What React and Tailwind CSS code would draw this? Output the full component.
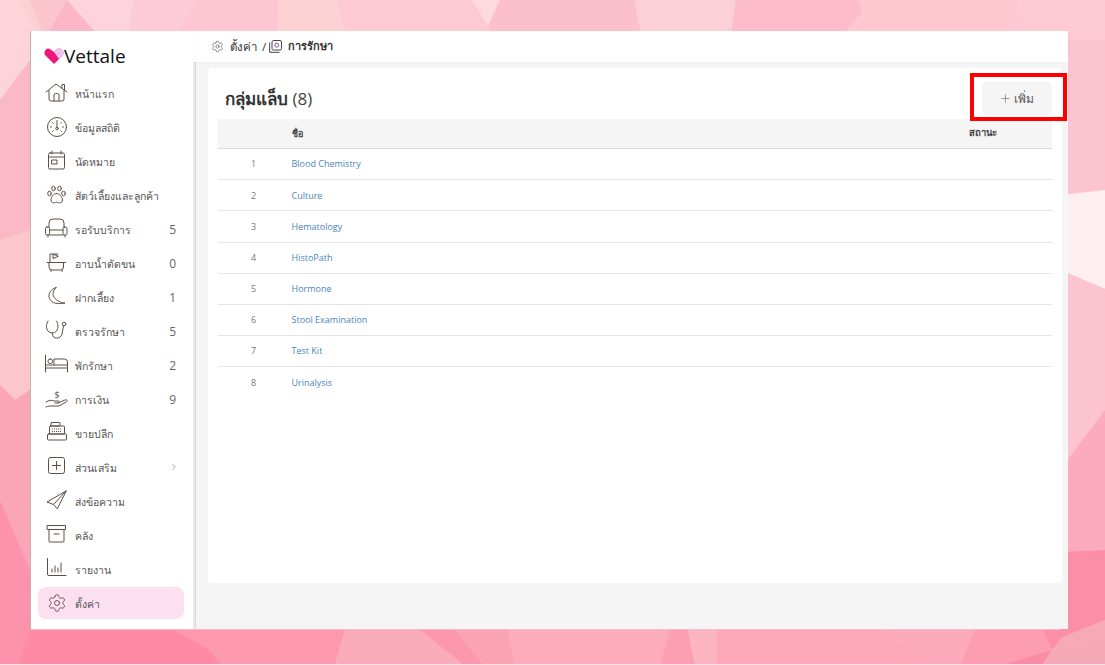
import React from "react";
import { Settings, ChevronRight, Plus } from "lucide-react";

const polys = [
  ["0,0 20,0 60,40 60,62 0,100", "#fdd4d9"],
  ["20,0 30,0 45,32 42,40", "#fbd0d3"],
  ["30,0 67,0 45,40", "#fcc5cd"],
  ["67,0 45,40 102,40", "#fbb7c7"],
  ["67,0 134,0 128,40 102,40", "#fdd3dd"],
  ["134,0 197,0 175,40 128,40", "#fccbd7"],
  ["197,0 278,0 278,40 175,40", "#fdc6d2"],
  ["278,0 338,0 348,40 278,40", "#fbd1d3"],
  ["338,0 472,0 488,27 500,40 348,40", "#fdcad3"],
  ["472,0 500,0 488,27", "#fddade"],
  ["500,0 634,0 642,40 500,40 488,27", "#fcbfcc"],
  ["634,0 736,0 730,40 642,40", "#fbd0d6"],
  ["736,0 858,0 862,12 838,40 730,40", "#fdbccb"],
  ["858,0 1018,0 1005,40 838,40 862,12", "#fdc8d0"],
  ["1018,0 1105,0 1105,40 1005,40", "#fdc9d3"],
  ["0,100 30,60 30,240 0,240", "#fbb8c6"],
  ["0,240 30,230 30,390 15,400 0,385", "#fcc6cd"],
  ["0,385 15,400 30,390 30,570 0,500", "#faa6b6"],
  ["0,500 30,570 30,665 0,665", "#fd92ad"],
  ["0,630 30,630 18,665 0,665", "#fd92ad"],
  ["30,630 175,630 210,650 222,665 18,665", "#fe8aa5"],
  ["175,630 345,630 335,665 222,665 210,650", "#fd99ad"],
  ["345,630 420,630 464,665 335,665", "#faacba"],
  ["420,630 455,630 484,665 464,665", "#fc98ad"],
  ["455,630 508,630 514,665 484,665", "#fca3b2"],
  ["508,630 670,630 660,665 514,665", "#fdacbb"],
  ["670,630 688,630 695,665 660,665", "#fc9fb3"],
  ["688,630 717,630 717,665 695,665", "#fdb5c3"],
  ["717,630 880,630 930,665 717,665", "#fea8ba"],
  ["880,630 975,630 960,665 930,665", "#fdaabd"],
  ["975,630 1043,630 1052,650 1000,665 960,665", "#fc9db2"],
  ["1043,630 1068,630 1052,650", "#fc8fa7"],
  ["1052,650 1105,640 1105,665 1042,665", "#f5a9b5"],
  ["1052,650 1042,665 1000,665", "#fc8ca6"],
  ["1068,630 1105,618 1105,640 1052,650", "#f6aab6"],
  ["1060,40 1105,40 1105,190 1060,195", "#fcc4d0"],
  ["1060,195 1105,190 1105,289 1060,270", "#fdeef0"],
  ["1060,270 1105,289 1105,410 1060,470", "#fbc4d0"],
  ["1060,470 1105,410 1105,550 1060,552", "#fcaabd"],
  ["1060,552 1105,550 1105,620 1060,638", "#fc8fa7"],
];

const S = ({ children }) => (
  <svg width="24" height="22" viewBox="0 0 24 22" fill="none" stroke="#5a5047" strokeWidth="1" strokeLinecap="round" strokeLinejoin="round">
    {children}
  </svg>
);

const icons = {
  home: <S><path d="M1 10 L11 2 L22 10" /><path d="M17 6 V2.5 H19.5 V8" /><path d="M4 8.5 V17 a2 2 0 0 0 2 2 H17 a2 2 0 0 0 2 -2 V8.5" /><path d="M9 19 V13 a1.5 1.5 0 0 1 1.5 -1.5 h2 a1.5 1.5 0 0 1 1.5 1.5 V19" /></S>,
  gauge: <S><circle cx="12" cy="11" r="9.5" /><path d="M12 4.5 V11" /><circle cx="12" cy="12.5" r="1.3" /><path d="M5.5 11 H6.5 M17.5 11 H18.5 M7.5 6.5 L8.2 7.2 M16.5 6.5 L15.8 7.2 M7.5 15.5 L8.2 14.8 M16.5 15.5 L15.8 14.8" /></S>,
  calendar: <S><rect x="3.5" y="3" width="16" height="16" rx="1.5" /><path d="M3.5 7 H19.5 M7 1 V4 M16 1 V4" /><rect x="7" y="10" width="5" height="4" /></S>,
  paw: <S><ellipse cx="4.5" cy="9.5" rx="1.8" ry="2.3" /><ellipse cx="8.5" cy="4.5" rx="1.8" ry="2.3" /><ellipse cx="14.5" cy="4.5" rx="1.8" ry="2.3" /><ellipse cx="18.5" cy="9.5" rx="1.8" ry="2.3" /><path d="M11.5 9.5 C8.5 9.5 6 13 6 16 C6 19 9 19.5 11.5 18 C14 19.5 17.5 19 17.5 16 C17.5 13 14.5 9.5 11.5 9.5 Z" /></S>,
  sofa: <S><path d="M4 9 V5 a4 4 0 0 1 4 -4 H15 a4 4 0 0 1 4 4 V9" /><rect x="0.5" y="9" width="4" height="8" rx="1.5" /><rect x="18" y="9" width="4" height="8" rx="1.5" /><path d="M4.5 12 H18 M4.5 17 H18 M3 17 V19 M20 17 V19" /></S>,
  bath: <S><path d="M5 10.5 V2 H13" /><path d="M8 2.5 V6.5 L13 4.5 Z" /><path d="M2 10.5 H20.5" /><path d="M4 10.5 V15 a3 3 0 0 0 3 3 H15.5 a3 3 0 0 0 3 -3 V10.5" /><path d="M6 18 V19.5 M17 18 V19.5" /></S>,
  moon: <S><path d="M11 1.5 C5 3.5 3.5 8 4 11 C5 16 10 19 20 17 C13 16.5 8.5 12 8 8.5 C8 6 9 3.5 11 1.5 Z" /></S>,
  steth: <S><path d="M3 1 C1 4 1 9 3 11 C5 13.5 9.5 13.5 11.5 11 C13.5 8 13.5 4 11.5 1" /><path d="M7.5 13 V14 C7.5 19.5 15.5 19.5 17 14 L18.5 6" /><circle cx="19" cy="4" r="1.8" /></S>,
  bed: <S><path d="M0.5 1 V18 M0.5 14 H22.5 M22.5 18 V8 a3 3 0 0 0 -3 -3 H9 V11 M0.5 11 H22.5" /><rect x="3" y="5" width="4.5" height="4.5" rx="2" /></S>,
  hand: <S><text x="12" y="10" textAnchor="middle" fontSize="9" fill="#5a5047" stroke="none" fontFamily="'Open Sans',sans-serif">$</text><path d="M1 14 C4 12 7 12 9 13 H13 C15 13 15 15 13 15 H10 M13 15 L20 12 C22 11 23 13 21 14 L14 18 H8 C5 18 3 18 1 19" /></S>,
  register: <S><rect x="6" y="0.5" width="9" height="3.5" rx="0.5" /><rect x="4.5" y="4" width="15" height="8" rx="1" /><rect x="2.5" y="12" width="19" height="6" rx="1" /><path d="M7 7 H17 M7 9.5 H17" strokeDasharray="1 1" strokeLinecap="butt" /></S>,
  plus: <S><rect x="3.5" y="1.5" width="16" height="16" rx="2" /><path d="M11.5 5.5 V13.5 M7.5 9.5 H15.5" /></S>,
  plane: <S><path d="M21 1 L2 12 L8.5 14.5 L12 18.5 Z M21 1 L8.5 14.5" /></S>,
  archive: <S><rect x="2.5" y="1.5" width="18" height="4" /><path d="M4 5.5 V17 a1 1 0 0 0 1 1 H18 a1 1 0 0 0 1 -1 V5.5 M9 10 H14" /></S>,
  chart: <S><path d="M2.5 0.5 V16 a1.5 1.5 0 0 0 1.5 1.5 H21" /><path d="M7 14 V11 M10 14 V8 M13 14 V10 M16 14 V5" /></S>,
  gear: <Settings size={20} strokeWidth={1} color="#5a4048" />,
};

const nav = [
  ["หน้าแรก", "home"],
  ["ข้อมูลสถิติ", "gauge"],
  ["นัดหมาย", "calendar"],
  ["สัตว์เลี้ยงและลูกค้า", "paw"],
  ["รอรับบริการ", "sofa", "5"],
  ["อาบน้ำตัดขน", "bath", "0"],
  ["ฝากเลี้ยง", "moon", "1"],
  ["ตรวจรักษา", "steth", "5"],
  ["พักรักษา", "bed", "2"],
  ["การเงิน", "hand", "9"],
  ["ขายปลีก", "register"],
  ["ส่วนเสริม", "plus", ">"],
  ["ส่งข้อความ", "plane"],
  ["คลัง", "archive"],
  ["รายงาน", "chart"],
  ["ตั้งค่า", "gear"],
];

const rows = ["Blood Chemistry", "Culture", "Hematology", "HistoPath", "Hormone", "Stool Examination", "Test Kit", "Urinalysis"];

export default function App() {
  return (
    <div className="relative w-[1105px] h-[665px] overflow-hidden bg-[#fcb8c8] font-['Open_Sans','Noto_Sans',sans-serif] pt-[31px] pl-[30px]">
      <svg className="absolute inset-0" width="1105" height="665" viewBox="0 0 1105 665">
        {polys.map(([p, c], i) => <polygon key={i} points={p} fill={c} />)}
        <rect x="0" y="664" width="1105" height="1" fill="#f3dfe4" />
      </svg>
      <div className="relative flex w-[1038px] h-[598px] bg-[#f5f5f5] border-l border-[#bfb0b4]">
        <aside className="w-[162px] shrink-0 bg-white flex flex-col">
          <div className="flex items-center h-[46px] pl-[13px] pt-[4px]">
            <svg width="20" height="16" viewBox="0 0 20 16">
              <path d="M10 16 L1 7 C-1 3 3 -1 6 1 L10 4 Z" fill="#f0157c" />
              <path d="M10 16 L10 4 L13 1 C16 -1 21 3 19 7 Z" fill="#f0157c" />
              <path d="M10 4 L13 1 C16 -1 21 3 19 7 L15 11 Z" fill="#e9c6f2" />
            </svg>
            <span className="text-[19px] leading-none text-[#111]">Vettale</span>
          </div>
          <nav className="flex flex-col">
            {nav.map(([label, key, count]) => {
              const active = label === "ตั้งค่า";
              return (
                <div key={label} className={`flex items-center h-[32px] mb-[2px] ml-[7px] mr-[9px] rounded-lg ${active ? "bg-[#fde0ef]" : ""}`}>
                  <div className="w-[37px] flex justify-center pl-[1px]">{icons[key]}</div>
                  <span className="text-[10.5px] pt-[3px] text-[#555] flex-1 whitespace-nowrap">{label}</span>
                  {count === ">" ? <ChevronRight size={10} className="mr-[5px] text-[#999]" /> : count ? <span className="text-[12px] pt-[1px] text-[#666] mr-[8px]">{count}</span> : null}
                </div>
              );
            })}
          </nav>
        </aside>
        <div className="w-[3px] shrink-0 mt-[31px] bg-[#e9e9e9] border-r border-[#d9d9d9]" />
        <main className="flex-1 flex flex-col min-w-0 -ml-[3px]">
          <div className="h-[31px] bg-white flex items-center pl-[18px] text-[11.5px] text-[#333] shadow-[0_1px_2px_rgba(0,0,0,0.03)]">
            <Settings size={13} strokeWidth={1} />
            <span className="ml-[6px]">ตั้งค่า</span>
            <span className="ml-[5px] mr-[3px]">/</span>
            <svg width="13" height="13" viewBox="0 0 13 13" fill="none" stroke="#444" strokeWidth="1">
              <rect x="3" y="0.5" width="9.5" height="9.5" rx="1.5" />
              <path d="M0.7 2.5 V12.3 H10.5" />
              <circle cx="7.8" cy="5.2" r="2" stroke="#8a4f9e" />
            </svg>
            <span className="ml-[6px] font-semibold text-[11px]">การรักษา</span>
          </div>
          <section className="mt-[6px] ml-[15px] mr-[6px] h-[515px] bg-white rounded-sm px-[10px]">
            <div className="flex items-start justify-between h-[51px]">
              <h1 className="text-[17px] leading-[26px] text-[#333] pl-[7px] pt-[18px]"><b className="font-semibold">กลุ่มแล็บ</b> <span className="font-normal text-[#444]">(8)</span></h1>
              <button className="w-[70px] h-[33px] mt-[14px] pr-[2px] bg-[#f5f5f5] rounded-sm text-[12px] text-[#555] flex items-center justify-center gap-[2px]">
                <Plus size={13} strokeWidth={1} />เพิ่ม
              </button>
            </div>
            <div className="flex items-center h-[30px] bg-[#f5f5f5] border-b border-[#ddd] text-[9px] font-semibold text-[#444]">
              <div className="w-[74px]" />
              <div className="flex-1">ชื่อ</div>
              <div className="w-[83px] text-[9.5px]">สถานะ</div>
            </div>
            {rows.map((r, i) => (
              <div key={r} className="flex items-center h-[31.2px] border-b border-[#e5e5e5] text-[9px] last:border-b-0">
                <div className="w-[74px] pl-[33px] text-[#777]">{i + 1}</div>
                <div className="flex-1 text-[#4a86b8] -ml-[0.5px]">{r}</div>
              </div>
            ))}
          </section>
        </main>
      </div>
      <div className="absolute left-[970px] top-[73px] w-[97px] h-[48px] border-[4px] border-[#ff0000]" />
    </div>
  );
}
